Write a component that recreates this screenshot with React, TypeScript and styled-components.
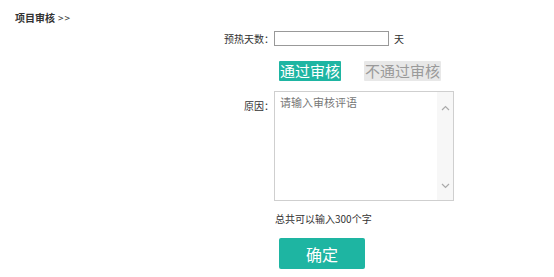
import React, { useState } from "react";
import styled, { createGlobalStyle } from "styled-components";

const GlobalStyle = createGlobalStyle`
  html, body {
    margin: 0;
    padding: 0;
    background: #ffffff;
  }
  body {
    font-family: "Noto Sans CJK SC", "Noto Sans", sans-serif;
    color: #333;
  }
`;

const Page = styled.div`
  width: 554px;
  height: 277px;
  box-sizing: border-box;
  padding: 11px 0 0 15px;
  overflow: hidden;
`;

const Title = styled.div`
  font-size: 10px;
  font-weight: bold;
  line-height: 14px;
  color: #333;
  span {
    font-weight: normal;
    margin-left: 3px;
    letter-spacing: 1px;
  }
`;

const Form = styled.div`
  display: flex;
  flex-direction: column;
  margin-top: 6px;
`;

const Row = styled.div<{ $top?: number; $align?: string }>`
  display: flex;
  align-items: ${(p) => p.$align || "center"};
  margin-top: ${(p) => p.$top || 0}px;
`;

const Label = styled.label<{ $top?: number }>`
  width: 259px;
  text-align: right;
  font-size: 10px;
  line-height: 14px;
  color: #333;
  flex-shrink: 0;
  margin-top: ${(p) => p.$top || 0}px;
`;

const DaysInput = styled.input`
  width: 115px;
  height: 15px;
  box-sizing: border-box;
  border: 1px solid #999;
  padding: 0 3px;
  font-size: 10px;
  outline: none;
`;

const Unit = styled.span`
  font-size: 10px;
  margin-left: 5px;
  color: #333;
`;

const Choices = styled.div`
  display: flex;
  gap: 23px;
  margin-left: 5px;
`;

const Choice = styled.button<{ $active?: boolean }>`
  height: 20px;
  box-sizing: border-box;
  padding: 0 1px;
  border: none;
  border-radius: 1px;
  font-family: inherit;
  font-size: 15px;
  line-height: 20px;
  cursor: pointer;
  background: ${(p) => (p.$active ? "#1eb5a2" : "#e8e8e8")};
  color: ${(p) => (p.$active ? "#ffffff" : "#9a9a9a")};
`;

const AreaBox = styled.div`
  display: flex;
  width: 180px;
  height: 110px;
  box-sizing: border-box;
  border: 1px solid #cfcfcf;
`;

const Area = styled.textarea`
  flex: 1;
  border: none;
  resize: none;
  outline: none;
  padding: 3px 5px;
  font-family: inherit;
  font-size: 11px;
  line-height: 15px;
  color: #333;
  &::placeholder {
    color: #777;
  }
`;

const ScrollTrack = styled.div`
  width: 16px;
  background: #f7f7f7;
  display: flex;
  flex-direction: column;
  justify-content: space-between;
  align-items: center;
  padding: 13px 0 11px;
`;

const Hint = styled.div`
  font-size: 10px;
  line-height: 14px;
  color: #333;
  margin-left: 1px;
`;

const Submit = styled.button`
  width: 86px;
  height: 31px;
  margin-left: 5px;
  border: none;
  border-radius: 2px;
  background: #1eb5a2;
  color: #ffffff;
  font-family: inherit;
  font-size: 16px;
  cursor: pointer;
`;

const Chevron = ({ up }: { up?: boolean }) => (
  <svg width="9" height="6" viewBox="0 0 9 6">
    <path
      d={up ? "M1 5 L4.5 1.5 L8 5" : "M1 1 L4.5 4.5 L8 1"}
      fill="none"
      stroke="#aaa"
      strokeWidth="1.2"
    />
  </svg>
);

export default function App() {
  const [pass, setPass] = useState(true);

  return (
    <Page>
      <GlobalStyle />
      <Title>
        项目审核<span>&gt;&gt;</span>
      </Title>
      <Form>
        <Row>
          <Label>预热天数：</Label>
          <DaysInput />
          <Unit>天</Unit>
        </Row>
        <Row $top={15}>
          <Label />
          <Choices>
            <Choice $active={pass} onClick={() => setPass(true)}>
              通过审核
            </Choice>
            <Choice $active={!pass} onClick={() => setPass(false)}>
              不通过审核
            </Choice>
          </Choices>
        </Row>
        <Row $top={10} $align="flex-start">
          <Label $top={8}>原因：</Label>
          <AreaBox>
            <Area placeholder="请输入审核评语" />
            <ScrollTrack>
              <Chevron up />
              <Chevron />
            </ScrollTrack>
          </AreaBox>
        </Row>
        <Row $top={11}>
          <Label />
          <Hint>总共可以输入300个字</Hint>
        </Row>
        <Row $top={12}>
          <Label />
          <Submit>确定</Submit>
        </Row>
      </Form>
    </Page>
  );
}
